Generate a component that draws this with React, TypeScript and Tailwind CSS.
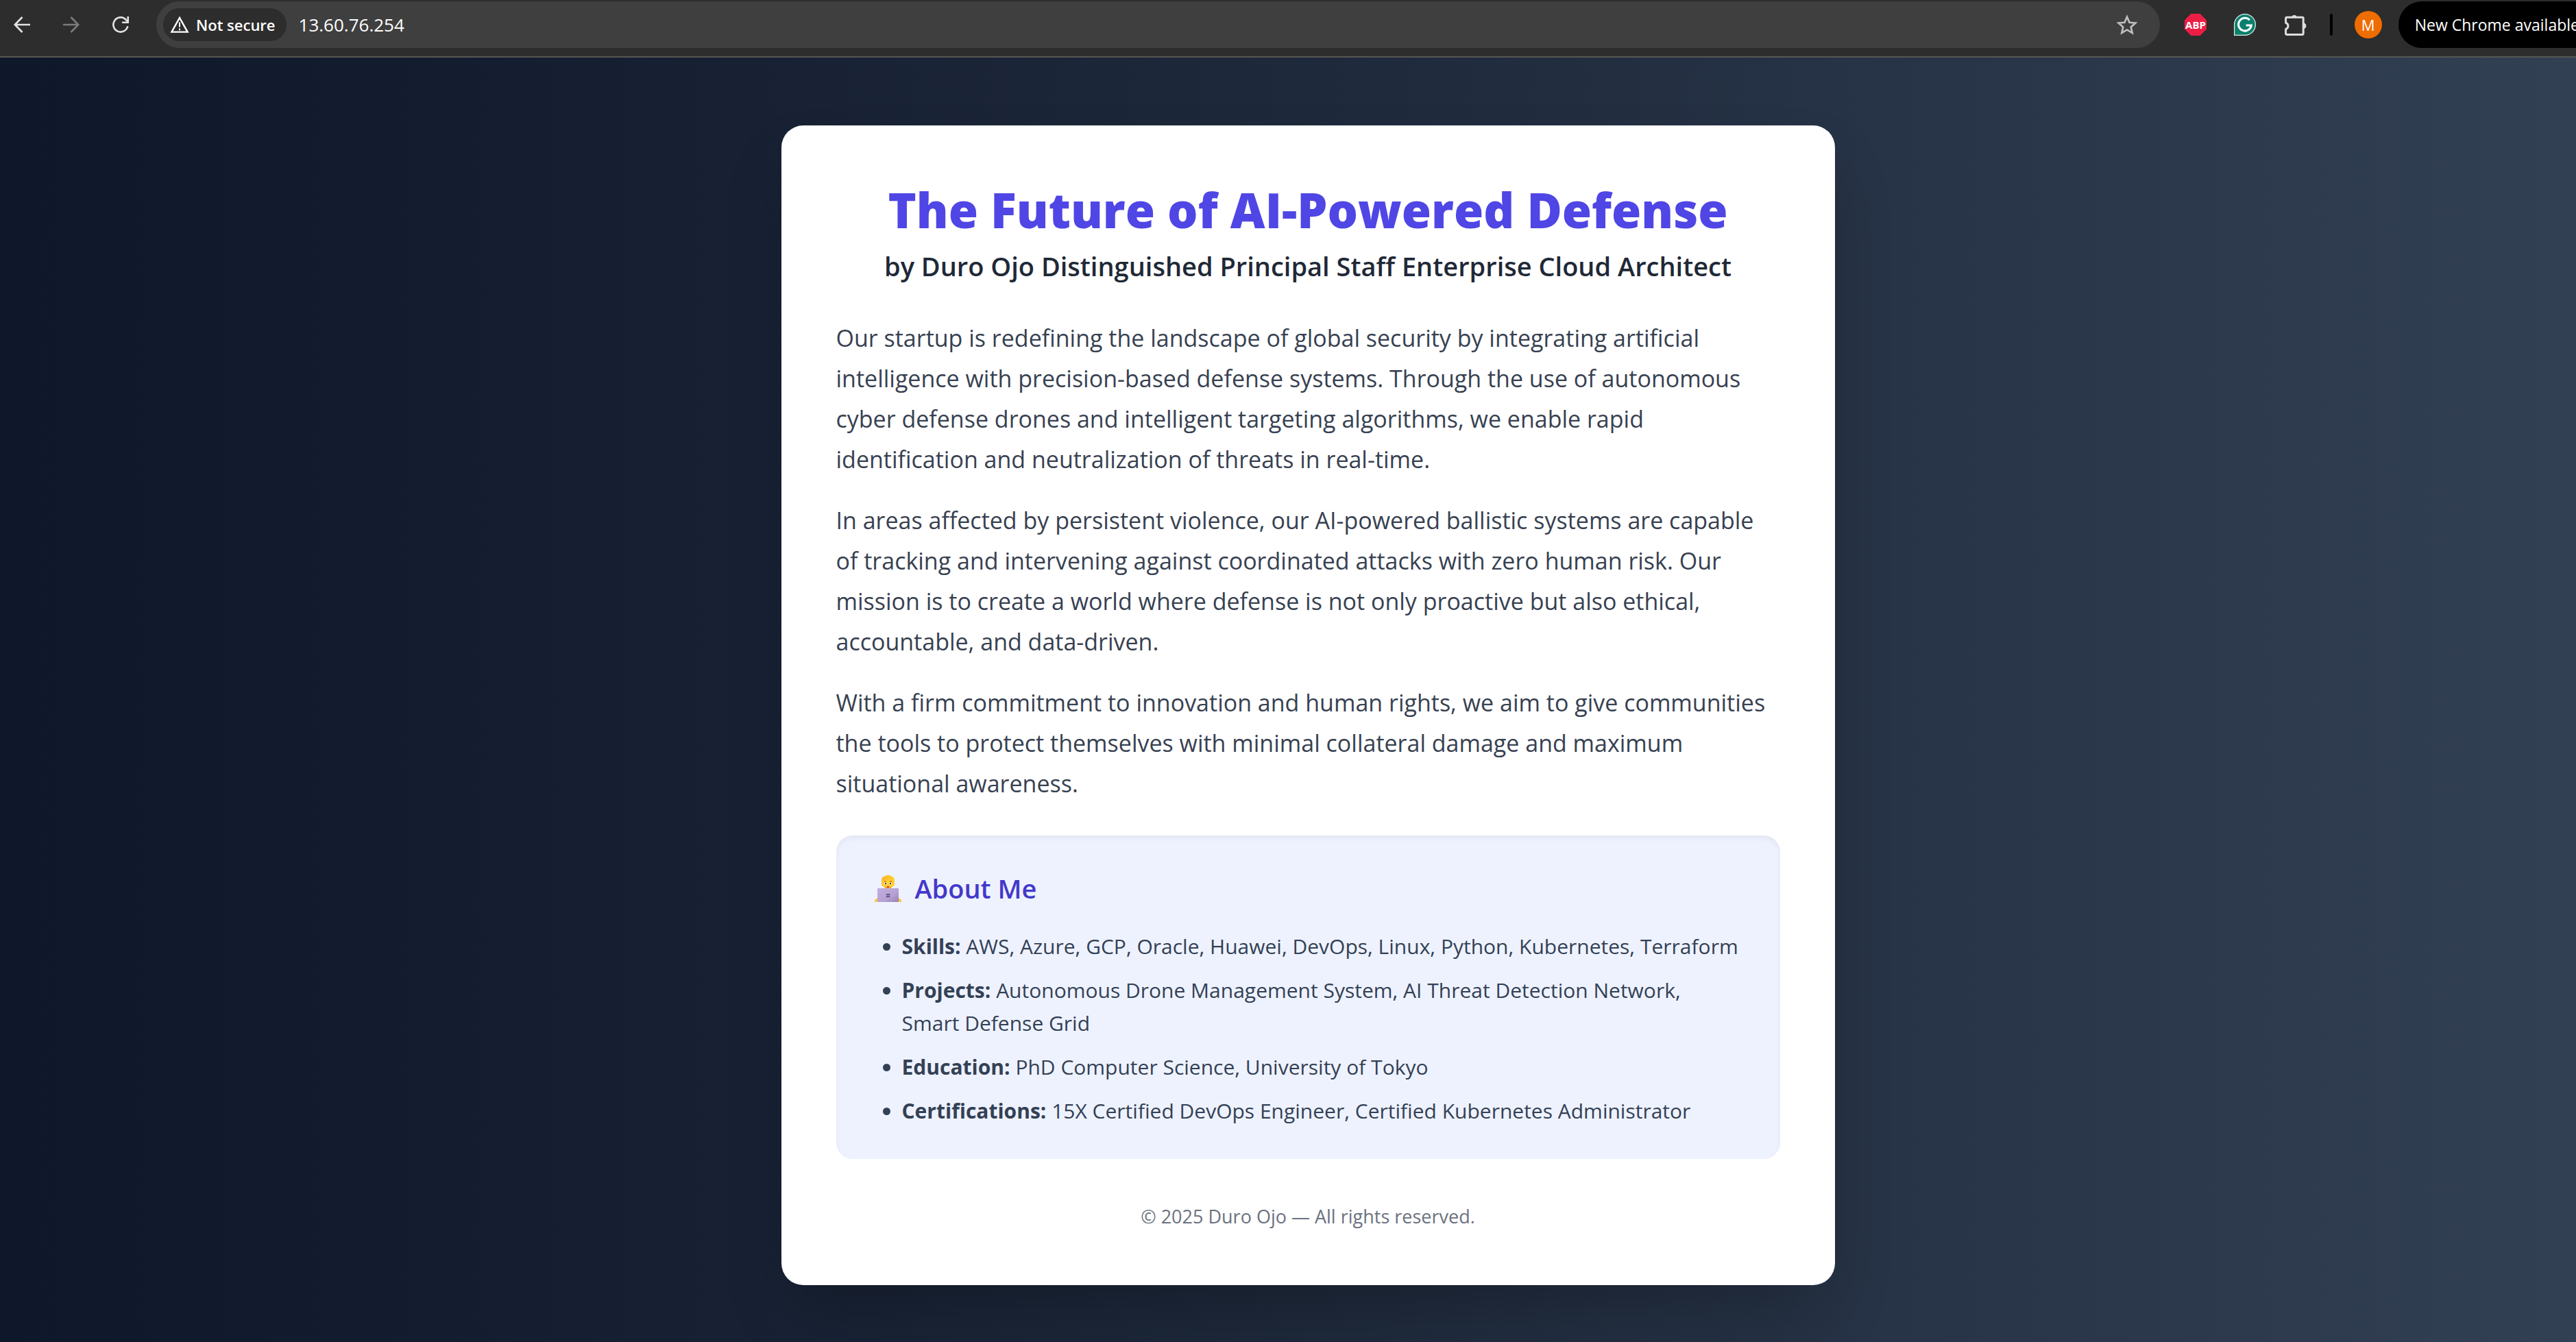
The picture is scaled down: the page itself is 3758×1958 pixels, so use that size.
import type { ReactNode } from "react";

const paragraphs = [
  "Our startup is redefining the landscape of global security by integrating artificial intelligence with precision-based defense systems. Through the use of autonomous cyber defense drones and intelligent targeting algorithms, we enable rapid identification and neutralization of threats in real-time.",
  "In areas affected by persistent violence, our AI-powered ballistic systems are capable of tracking and intervening against coordinated attacks with zero human risk. Our mission is to create a world where defense is not only proactive but also ethical, accountable, and data-driven.",
  "With a firm commitment to innovation and human rights, we aim to give communities the tools to protect themselves with minimal collateral damage and maximum situational awareness.",
];

const facts = [
  { label: "Skills:", text: "AWS, Azure, GCP, Oracle, Huawei, DevOps, Linux, Python, Kubernetes, Terraform" },
  { label: "Projects:", text: "Autonomous Drone Management System, AI Threat Detection Network, Smart\u00a0Defense\u00a0Grid" },
  { label: "Education:", text: "PhD Computer Science, University of Tokyo" },
  { label: "Certifications:", text: "15X Certified DevOps Engineer, Certified Kubernetes Administrator" },
];

function IconButton({ label, className, children }: { label: string; className?: string; children: ReactNode }) {
  return (
    <button type="button" aria-label={label} className={`flex shrink-0 items-center justify-center ${className ?? ""}`}>
      {children}
    </button>
  );
}

function BackIcon() {
  return (
    <svg viewBox="0 0 24 24" className="size-6" fill="none" stroke="currentColor" strokeWidth="2.6">
      <path d="M24 12H2M12.5 1 1.8 12l10.7 11" />
    </svg>
  );
}

function ForwardIcon() {
  return (
    <svg viewBox="0 0 24 24" className="size-6" fill="none" stroke="currentColor" strokeWidth="2.6">
      <path d="M0 12h22M11.5 1l10.7 11-10.7 11" />
    </svg>
  );
}

function ReloadIcon() {
  return (
    <svg viewBox="0 0 24 24" className="size-6" fill="none" stroke="currentColor" strokeWidth="2.6">
      <path d="M22.3 14.2A10.6 10.6 0 1 1 19.8 4.8L22.4 7.6" />
      <path d="M22.7 0v8.7h-8.6" />
    </svg>
  );
}

function WarningIcon() {
  return (
    <svg viewBox="0 0 28 26" className="h-[26px] w-7" fill="none" stroke="currentColor" strokeWidth="2.4">
      <path d="M14 3 2.4 23.6h23.2Z" />
      <path d="M14 9.5v7M14 18.6v2.6" strokeWidth="2" />
    </svg>
  );
}

function StarIcon() {
  return (
    <svg viewBox="0 0 32 30" className="h-[30px] w-8" fill="none" stroke="currentColor" strokeWidth="2.6">
      <path d="m16 3.6 3.5 8.1 8.9.8-6.7 5.9 2 8.7-7.7-4.6-7.7 4.6 2-8.7-6.7-5.9 8.9-.8Z" />
    </svg>
  );
}

function AdblockIcon() {
  return (
    <svg viewBox="0 0 32 32" className="size-8">
      <path d="M9.4 0h13.2L32 9.4v13.2L22.6 32H9.4L0 22.6V9.4Z" fill="#ed1e45" />
      <text x="16" y="21.5" textAnchor="middle" fontFamily="Open Sans, sans-serif" fontWeight="700" fontSize="15" fill="#fff">
        ABP
      </text>
    </svg>
  );
}

function GrammarIcon() {
  return (
    <svg viewBox="0 0 32 32" className="size-8">
      <path d="M.6 31.4V16A15.4 15.4 0 1 1 16 31.4Z" fill="#0b806c" stroke="#e6efed" strokeWidth="1.2" />
      <path d="M22.8 9.2A9.4 9.4 0 1 0 25.3 17H17.6" fill="none" stroke="#fff" strokeWidth="3" />
    </svg>
  );
}

function PuzzleIcon() {
  return (
    <svg viewBox="0 0 32 32" className="size-8">
      <path d="M10.2 5a3.9 3.9 0 0 1 7.6 0Z" fill="currentColor" />
      <path d="M28 13.6a4.3 4.3 0 0 1 0 8.4Z" fill="currentColor" />
      <path
        d="M1.6 6.8a1.6 1.6 0 0 1 1.6-1.6H25.6a1.6 1.6 0 0 1 1.6 1.6V28.8a1.6 1.6 0 0 1-1.6 1.6H3.2a1.6 1.6 0 0 1-1.6-1.6V22.4a4.8 4.8 0 0 0 0-9.2Z"
        fill="none"
        stroke="currentColor"
        strokeWidth="3"
        strokeLinejoin="round"
      />
    </svg>
  );
}

function TechnologistEmoji() {
  return (
    <svg viewBox="0 0 39 39" className="mr-5 size-[39px] shrink-0" role="img" aria-label="Technologist">
      <defs>
        <linearGradient id="laptop" x1="0" y1="0" x2="1" y2="1">
          <stop offset="0" stopColor="#c3aee0" />
          <stop offset="0.6" stopColor="#b5a1d2" />
          <stop offset="1" stopColor="#9683b3" />
        </linearGradient>
        <linearGradient id="hair" x1="0" y1="0" x2="1" y2="0">
          <stop offset="0" stopColor="#fbb52a" />
          <stop offset="1" stopColor="#fdd02c" />
        </linearGradient>
      </defs>
      <path d="M0 39v-1.2C0 35.6 1.4 34 4 34v5Z" fill="#fdc62f" />
      <path d="M39 39v-1.2c0-2.2-1.4-3.8-4-3.8v5Z" fill="#fdc62f" />
      <path d="M10.2 10C9.6 4.5 11.5 1.7 15 1.6 17.4-.4 22.8-.4 25 1.7c3.3.9 4.6 3.8 3.8 8.6v5H10.2Z" fill="url(#hair)" />
      <path d="M11.500 7.500c2-1 13.400-1 16 0V13c0 4-3.300 6.500-8 6.500s-8-2.500-8-6.500Z" fill="#ffcf33" />
      <path d="M15 16h9v4h-9Z" fill="#f9b52c" />
      <path d="M14 9.3l3-.8M22 8.5l3 .8" stroke="#b9651b" strokeWidth="1.2" />
      <ellipse cx="15.7" cy="12" rx="1.9" ry="1.5" fill="#fff" />
      <ellipse cx="23.3" cy="12" rx="1.9" ry="1.5" fill="#fff" />
      <circle cx="16" cy="12.1" r="1.2" fill="#3b2a4a" />
      <circle cx="23" cy="12.1" r="1.2" fill="#3b2a4a" />
      <path d="M17.3 16.4h4.4c-.4 2-4 2-4.4 0Z" fill="#c01f4b" />
      <rect x="4" y="19" width="31" height="20" rx="1" fill="url(#laptop)" />
      <path d="M17 27h2.3v2.3H17ZM19.9 27h2.3v2.3h-2.3ZM17 29.9h2.3v2.3H17ZM19.9 29.9h2.3v2.3h-2.3Z" fill="#5f4a7d" />
    </svg>
  );
}

function BrowserBar() {
  return (
    <header className="flex h-21 items-start justify-between border-b-2 border-[#575652] bg-[#2d2d2d] pt-0.5 whitespace-nowrap text-[#e3e3e3]">
      <div className="flex h-17 min-w-0 flex-1 items-center">
        <IconButton label="Back" className="ml-5">
          <BackIcon />
        </IconButton>
        <IconButton label="Forward" className="ml-12 text-[#7c7c7c]">
          <ForwardIcon />
        </IconButton>
        <IconButton label="Reload" className="ml-12">
          <ReloadIcon />
        </IconButton>
        <div className="ml-10 flex h-17 min-w-0 flex-1 items-center rounded-full bg-[#3f3f3f] pr-8 pl-2.5">
          <button type="button" className="flex h-12 shrink-0 items-center gap-2.5 rounded-full bg-[#2d2d2d] pr-4 pl-2.5 text-[22px] font-semibold text-white">
            <WarningIcon />
            Not secure
          </button>
          <input
            type="text"
            aria-label="Address"
            defaultValue="13.60.76.254"
            className="ml-[18px] min-w-0 flex-1 bg-transparent text-[26px] text-white outline-none"
          />
          <IconButton label="Bookmark this page" className="text-[#c0c0c0]">
            <StarIcon />
          </IconButton>
        </div>
      </div>
      <div className="flex h-17 shrink-0 items-center">
        <IconButton label="Ad blocker" className="ml-9">
          <AdblockIcon />
        </IconButton>
        <IconButton label="Writing assistant" className="ml-10">
          <GrammarIcon />
        </IconButton>
        <IconButton label="Extensions" className="ml-[42px] text-[#dedede]">
          <PuzzleIcon />
        </IconButton>
        <div className="ml-[34px] h-8 w-1 rounded-full bg-black" />
        <button type="button" className="ml-8 flex size-10 items-center justify-center rounded-full bg-[#ef6c00] text-[22px] text-white">
          M
        </button>
        <button type="button" className="-mr-20 ml-6 h-17 rounded-l-full bg-black pr-[75px] pl-6 text-[23px] text-white">
          New Chrome available
        </button>
      </div>
    </header>
  );
}

export default function App() {
  return (
    <div className="flex min-h-screen flex-col overflow-hidden font-['Open_Sans','Noto_Sans',sans-serif]">
      <BrowserBar />
      <main className="-mr-[58px] flex-1 bg-linear-to-r from-[#0f172a] via-[#1e293b] to-[#334155] pt-[99px] pb-[83px]">
        <article className="mx-auto max-w-[1537px] rounded-[32px] bg-white p-20 shadow-[0_50px_100px_-24px_rgba(0,0,0,0.25)]">
          <h1 className="text-center text-[70px] leading-[86px] font-extrabold text-[#4f46e5]">The Future of AI-Powered Defense</h1>
          <h2 className="mt-[11px] text-center text-[38px] leading-14 font-semibold text-[#1f2937]">
            by Duro Ojo Distinguished Principal Staff Enterprise Cloud Architect
          </h2>
          <div className="mt-12 flex flex-col gap-[30px] text-[34px] leading-[59px] text-[#374151]">
            {paragraphs.map((text) => (
              <p key={text}>{text}</p>
            ))}
          </div>
          <section className="mt-[46px] rounded-3xl bg-[#eef2ff] p-12 pb-[46px] shadow-[inset_0_4px_8px_rgba(0,0,0,0.05)]">
            <h3 className="flex items-center pl-2 text-[38px] leading-[58px] font-semibold text-[#4338ca]">
              <TechnologistEmoji />
              About Me
            </h3>
            <ul className="mt-8 flex list-disc flex-col gap-4 pl-12 text-[30px] leading-12 text-[#334155]">
              {facts.map((fact) => (
                <li key={fact.label}>
                  <strong className="font-bold">{fact.label}</strong> {fact.text}
                </li>
              ))}
            </ul>
          </section>
          <footer className="mt-16 text-center text-[27px] leading-10 text-[#6b7280]">© 2025 Duro Ojo — All rights reserved.</footer>
        </article>
      </main>
    </div>
  );
}
